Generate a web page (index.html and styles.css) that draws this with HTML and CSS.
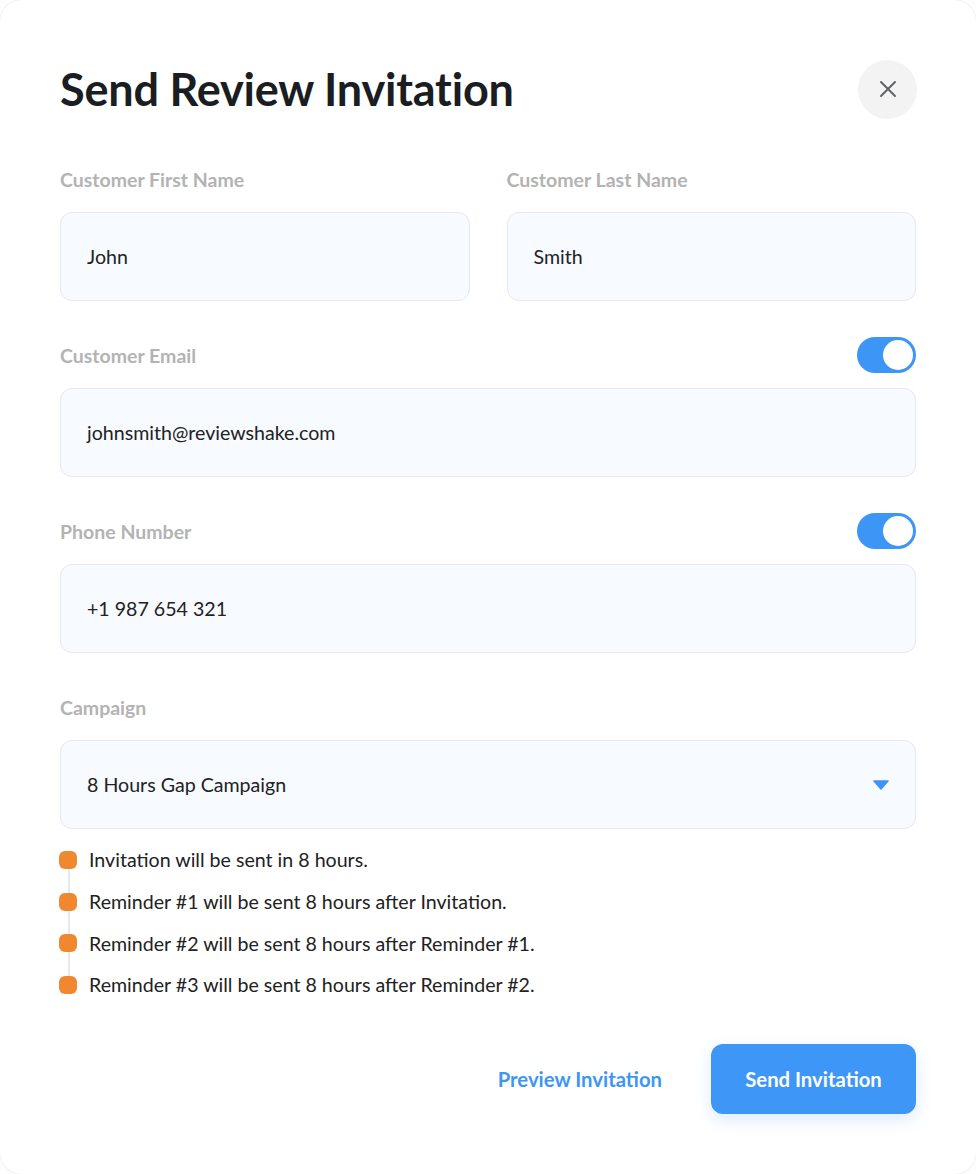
FILE: index.html
```html
<!DOCTYPE html>
<html>
<head>
<meta charset="utf-8">
<link rel="stylesheet" href="styles.css">
</head>
<body>
<div class="modal">
  <div class="header">
    <h1 class="title">Send Review Invitation</h1>
    <button class="close" aria-label="Close">
      <svg width="18" height="18" viewBox="0 0 18 18"><path d="M2 2L16 16M16 2L2 16" stroke="#5f6368" stroke-width="2" stroke-linecap="round"/></svg>
    </button>
  </div>

  <div class="row two">
    <div class="field">
      <div class="label-row"><span class="label">Customer First Name</span></div>
      <div class="input">John</div>
    </div>
    <div class="field">
      <div class="label-row"><span class="label">Customer Last Name</span></div>
      <div class="input">Smith</div>
    </div>
  </div>

  <div class="field">
    <div class="label-row"><span class="label">Customer Email</span><span class="toggle"><span class="knob"></span></span></div>
    <div class="input">johnsmith@reviewshake.com</div>
  </div>

  <div class="field">
    <div class="label-row"><span class="label">Phone Number</span><span class="toggle"><span class="knob"></span></span></div>
    <div class="input">+1 987 654 321</div>
  </div>

  <div class="field last">
    <div class="label-row"><span class="label">Campaign</span></div>
    <div class="input select">8 Hours Gap Campaign
      <svg class="caret" width="16" height="10" viewBox="0 0 16 10"><path d="M1 1H15L8 9Z" fill="#3d96f5" stroke="#3d96f5" stroke-width="1.5" stroke-linejoin="round"/></svg>
    </div>
  </div>

  <ul class="timeline">
    <li><span class="dot"></span>Invitation will be sent in 8 hours.</li>
    <li><span class="dot"></span>Reminder #1 will be sent 8 hours after Invitation.</li>
    <li><span class="dot"></span>Reminder #2 will be sent 8 hours after Reminder #1.</li>
    <li><span class="dot"></span>Reminder #3 will be sent 8 hours after Reminder #2.</li>
  </ul>

  <div class="actions">
    <button class="link-btn">Preview Invitation</button>
    <button class="primary-btn">Send Invitation</button>
  </div>
</div>
</body>
</html>
```

FILE: styles.css
```css
* { box-sizing: border-box; }
html, body { margin: 0; padding: 0; background: #fdfdfd; }
body {
  font-family: Lato, "Noto Sans", "Liberation Sans", sans-serif;
  color: #1f2328;
}
.modal {
  width: 976px;
  height: 1174px;
  background: #fff;
  border-radius: 22px;
  box-shadow: 0 0 2px rgba(0,0,0,0.12);
  padding: 58px 60px 0 60px;
}
.header {
  display: flex;
  justify-content: space-between;
  align-items: center;
  height: 62px;
  margin-bottom: 40px;
}
.title {
  margin: 0;
  font-size: 45px;
  font-weight: 700;
  color: #1a1d21;
  letter-spacing: -0.2px;
}
.close {
  width: 59px;
  height: 59px;
  border-radius: 50%;
  border: none;
  background: #f3f3f3;
  display: flex;
  align-items: center;
  justify-content: center;
  margin-right: -1px;
  padding: 0;
}
.row.two {
  display: grid;
  grid-template-columns: 1fr 1fr;
  column-gap: 37px;
}
.field { margin-bottom: 35px; }
.field.last { margin-bottom: 10px; }
.label-row {
  display: flex;
  justify-content: space-between;
  align-items: center;
  height: 38px;
  margin-bottom: 14px;
}
.label {
  font-size: 19.5px;
  font-weight: 700;
  color: #b3b3b3;
}
.toggle {
  width: 59px;
  height: 36px;
  border-radius: 18px;
  background: #3d96f5;
  position: relative;
  display: block;
}
.knob {
  position: absolute;
  right: 3px;
  top: 3px;
  width: 30px;
  height: 30px;
  border-radius: 50%;
  background: #fff;
}
.input {
  height: 89px;
  border: 1px solid #e4e9ef;
  border-radius: 12px;
  background: #f7faff;
  display: flex;
  align-items: center;
  padding: 0 26px;
  font-size: 19.6px;
  color: #222;
}
.select {
  justify-content: space-between;
  padding-right: 26px;
}
.timeline {
  list-style: none;
  margin: 0;
  padding: 0;
  position: relative;
}
.timeline::before {
  content: "";
  position: absolute;
  left: 8px;
  top: 14px;
  bottom: 14px;
  width: 2px;
  background: #e6eaf0;
}
.timeline li {
  display: flex;
  align-items: center;
  height: 41.7px;
  font-size: 19.6px;
  color: #222;
  position: relative;
}
.dot {
  width: 18px;
  height: 18px;
  border-radius: 6px;
  background: #f0882f;
  margin-right: 12px;
  margin-left: -1px;
  flex: none;
}
.actions {
  display: flex;
  justify-content: flex-end;
  align-items: center;
  margin-top: 38px;
  gap: 49px;
}
.link-btn {
  border: none;
  background: none;
  font-family: inherit;
  font-size: 20.3px;
  font-weight: 700;
  color: #3d96f5;
  padding: 0;
}
.primary-btn {
  width: 205px;
  height: 70px;
  border: none;
  border-radius: 12px;
  background: #3e96f6;
  color: #fff;
  font-family: inherit;
  font-size: 20.3px;
  font-weight: 700;
  box-shadow: 0 6px 16px rgba(62,150,246,0.18);
}
```
